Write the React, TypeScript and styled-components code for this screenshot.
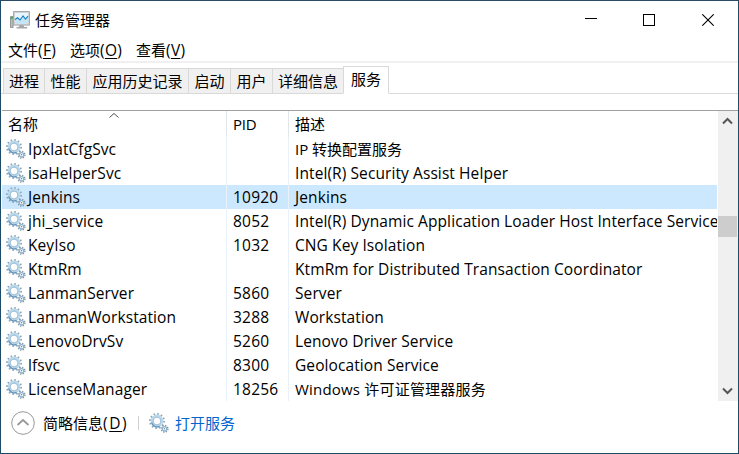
import React from 'react';
import styled, { createGlobalStyle } from 'styled-components';

const GlobalStyle = createGlobalStyle`
  html, body { margin: 0; padding: 0; background: #fff; overflow: hidden; }
  * { box-sizing: border-box; }
`;

const Window = styled.div`
  display: flex;
  flex-direction: column;
  width: 739px;
  height: 454px;
  border: 1px solid #1d4c68;
  border-top-color: #2b4a63;
  background: #fff;
  color: #000;
  font: 400 15px/24px 'Open Sans', 'Noto Sans CJK SC', sans-serif;
  overflow: hidden;
  white-space: nowrap;
`;

const TitleBar = styled.header`
  display: flex;
  align-items: center;
  height: 37px;
  padding-left: 8px;
`;

const Title = styled.span`
  flex: 1;
  margin-left: 4px;
`;

const Caption = styled.div`
  display: flex;
  margin-right: 1px;
`;

const CaptionButton = styled.button`
  display: grid;
  place-items: center;
  width: 58.5px;
  height: 34px;
  padding: 0;
  border: 0;
  background: none;
`;

const MenuBar = styled.nav`
  display: flex;
  height: 25px;
  border-bottom: 2px solid #f0f0f0;
  padding-left: 7px;
`;

const MenuItem = styled.span<{ $width: number }>`
  width: ${(p) => p.$width}px;
`;

const Key = styled.span<{ $spacing?: number }>`
  font-size: 15.5px;
  line-height: 1;
  letter-spacing: ${(p) => p.$spacing ?? 0.3}px;
`;

const Mnemonic = styled.span`
  text-decoration: underline;
  text-decoration-thickness: 1px;
  text-underline-offset: 2px;
  text-decoration-skip-ink: none;
`;

const TabStrip = styled.div`
  display: flex;
  align-items: flex-end;
  height: 31px;
  margin-bottom: 16px;
  padding-left: 2px;
  box-shadow: inset 0 -1px #d9d9d9;
`;

const Tab = styled.div<{ $width: number; $active?: boolean }>`
  width: ${(p) => p.$width}px;
  height: ${(p) => (p.$active ? 28 : 26)}px;
  padding-top: 1px;
  border: 1px solid #d9d9d9;
  border-right-width: ${(p) => (p.$active ? 1 : 0)}px;
  border-bottom-color: ${(p) => (p.$active ? '#fff' : '#d9d9d9')};
  background: ${(p) => (p.$active ? '#fff' : '#f0f0f0')};
  line-height: 22px;
  text-align: center;
`;

const ListView = styled.main`
  display: flex;
  height: 291px;
  margin-left: 1px;
  border-top: 1px solid #a0a0a0;
`;

const Table = styled.div`
  width: 715px;
  overflow: hidden;
`;

const HeaderRow = styled.div`
  display: grid;
  grid-template-columns: 225px 62px 1fr;
  height: 26px;
`;

const HeaderCell = styled.div<{ $spacing?: number }>`
  display: flex;
  padding-left: 6px;
  padding-top: 1px;
  border-right: 1px solid #e0e6ea;
  letter-spacing: ${(p) => p.$spacing ?? 0}px;
  &:last-child { border-right: 0; }
`;

const SortMark = styled.svg`
  margin: 0 0 0 68px;
`;

const Row = styled.div<{ $selected?: boolean }>`
  display: grid;
  grid-template-columns: 225px 62px 1fr;
  height: 24px;
  background: ${(p) => (p.$selected ? '#cce8ff' : '#fff')};
`;

const Cell = styled.div<{ $cjk?: boolean; $spacing?: number }>`
  display: flex;
  align-items: center;
  height: 24px;
  padding-left: 6px;
  border-right: 1px solid #e9f2fb;
  overflow: hidden;
  font-size: ${(p) => (p.$cjk ? 15 : 15.5)}px;
  line-height: ${(p) => (p.$cjk ? 24 : 25)}px;
  letter-spacing: ${(p) => p.$spacing ?? 0.09}px;
  &:first-child { padding-left: 4px; }
  &:last-child { border-right: 0; }
`;

const CellText = styled.span<{ $drop?: boolean }>`
  margin-top: ${(p) => (p.$drop ? 1 : 0)}px;
`;

const ScrollBar = styled.div`
  display: flex;
  flex-direction: column;
  width: 20px;
  margin-left: 1px;
  background: #f0f0f0;
`;

const ScrollButton = styled.div`
  display: grid;
  place-items: center;
  width: 19px;
  height: 20px;
`;

const Track = styled.div`
  flex: 1;
  padding-top: 85px;
`;

const Thumb = styled.div`
  width: 19px;
  height: 21px;
  background: #cdcdcd;
`;

const Footer = styled.footer`
  display: flex;
  align-items: center;
  height: 44px;
  padding-left: 10px;
`;

const Toggle = styled.div`
  display: flex;
  align-items: center;
  gap: 8px;
  width: 127px;
`;

const Divider = styled.i`
  width: 1px;
  height: 14px;
  background: #d0d0d0;
`;

const OpenLink = styled.a`
  display: flex;
  align-items: center;
  gap: 4px;
  margin-left: 10px;
  color: #0066cc;
`;

const GearSvg = styled.svg`
  flex: none;
  margin-right: 2px;
`;

function Gears() {
  return (
    <GearSvg width="20" height="20" viewBox="0 0 20 20" fill="none">
      <circle cx="8" cy="8" r="7" stroke="#8fa6b8" strokeWidth="2" strokeDasharray="1.6 2.065" />
      <circle cx="8" cy="8" r="5.2" stroke="#b9d9ec" strokeWidth="2.4" />
      <path d="M2.6 9.5a5.8 5.8 0 0 0 8 3.9" stroke="#6796bc" strokeWidth="1.3" />
      <circle cx="8" cy="8" r="3.9" fill="#fff" stroke="#83a9c5" strokeWidth=".8" />
      <circle cx="15.6" cy="15.8" r="3.3" stroke="#8296a5" strokeWidth="1.5" strokeDasharray="1.3 1.29" />
      <circle cx="15.6" cy="15.8" r="2.2" fill="#fff" stroke="#91b5cd" strokeWidth="1.4" />
      <circle cx="15.6" cy="15.8" r=".7" fill="#5f86a2" />
    </GearSvg>
  );
}

function MonitorIcon() {
  return (
    <svg width="22" height="20" viewBox="0 0 22 20">
      <path d="M1.5 6.5h2.6v11H1.5z" fill="#b9bcbc" stroke="#858989" strokeWidth=".8" />
      <path d="M1.6 7h2.2v1.8H1.6z" fill="#37b34a" />
      <path d="M10.5 15h4l.7 2h3v1.4H7.5V17h2.4z" fill="#a4a8aa" />
      <path d="M4.5 1.5h16v13.6h-16z" fill="#d0d3d3" stroke="#a6aaab" />
      <path d="M6 3h13v10.4H6z" fill="#e8f6fe" />
      <path d="M6 9.5 8.5 7.8 11 10l3-4 2.5 3.2L19 6.2v7.2H6z" fill="#c3e5f8" />
      <path d="M6 9.5 8.5 7.8 11 10l3-4 2.5 3.2L19 6.2" fill="none" stroke="#1681c4" strokeWidth="1.1" />
    </svg>
  );
}

const menus = [
  { label: '文件', key: 'F', width: 62 },
  { label: '选项', key: 'O', width: 66 },
  { label: '查看', key: 'V', width: 60 },
];

const tabs = [
  { label: '进程', width: 41 },
  { label: '性能', width: 42 },
  { label: '应用历史记录', width: 102 },
  { label: '启动', width: 42 },
  { label: '用户', width: 42 },
  { label: '详细信息', width: 71 },
  { label: '服务', width: 46, active: true },
];

const services = [
  { name: 'IpxlatCfgSvc', pid: '', text: 'IP 转换配置服务', cjk: true, textGap: 0 },
  { name: 'isaHelperSvc', pid: '', text: 'Intel(R) Security Assist Helper' },
  { name: 'Jenkins', pid: '10920', text: 'Jenkins', selected: true },
  { name: 'jhi_service', pid: '8052', text: 'Intel(R) Dynamic Application Loader Host Interface Service' },
  { name: 'KeyIso', pid: '1032', text: 'CNG Key Isolation' },
  { name: 'KtmRm', pid: '', text: 'KtmRm for Distributed Transaction Coordinator' },
  { name: 'LanmanServer', pid: '5860', text: 'Server' },
  { name: 'LanmanWorkstation', pid: '3288', text: 'Workstation' },
  { name: 'LenovoDrvSv', pid: '5260', text: 'Lenovo Driver Service' },
  { name: 'lfsvc', pid: '8300', text: 'Geolocation Service' },
  { name: 'LicenseManager', pid: '18256', text: 'Windows 许可证管理器服务', cjk: true, textGap: 0.2 },
];

export default function App() {
  return (
    <>
      <GlobalStyle />
      <Window>
        <TitleBar>
          <MonitorIcon />
          <Title>任务管理器</Title>
          <Caption>
            <CaptionButton aria-label="最小化">
              <svg width="12" height="12" shapeRendering="crispEdges"><path d="M0 4.5h12" stroke="#000" /></svg>
            </CaptionButton>
            <CaptionButton aria-label="最大化">
              <svg width="12" height="12" shapeRendering="crispEdges"><path d="M.5.5h11v11H.5z" fill="none" stroke="#000" /></svg>
            </CaptionButton>
            <CaptionButton aria-label="关闭">
              <svg width="12" height="12"><path d="m.3.3 11.4 11.4M11.7.3.3 11.7" stroke="#000" strokeWidth="1.1" /></svg>
            </CaptionButton>
          </Caption>
        </TitleBar>
        <MenuBar>
          {menus.map((m) => (
            <MenuItem key={m.key} $width={m.width}>
              {m.label}
              <Key>(<Mnemonic>{m.key}</Mnemonic>)</Key>
            </MenuItem>
          ))}
        </MenuBar>
        <TabStrip>
          {tabs.map((t) => (
            <Tab key={t.label} $width={t.width} $active={t.active}>{t.label}</Tab>
          ))}
        </TabStrip>
        <ListView>
          <Table>
            <HeaderRow>
              <HeaderCell>
                名称
                <SortMark width="16" height="8"><path d="m3.5 5.5 4.5-4 4.5 4" fill="none" stroke="#555" /></SortMark>
              </HeaderCell>
              <HeaderCell $spacing={-0.2}>PID</HeaderCell>
              <HeaderCell>描述</HeaderCell>
            </HeaderRow>
            {services.map((s) => (
              <Row key={s.name} $selected={s.selected}>
                <Cell><Gears /><CellText $drop>{s.name}</CellText></Cell>
                <Cell $spacing={0.2}><CellText $drop>{s.pid}</CellText></Cell>
                <Cell $cjk={s.cjk} $spacing={s.textGap}><CellText $drop={!s.cjk}>{s.text}</CellText></Cell>
              </Row>
            ))}
          </Table>
          <ScrollBar>
            <ScrollButton>
              <svg width="11" height="8"><path d="m1 6.5 4.5-4.5L10 6.5" fill="none" stroke="#555" strokeWidth="2" /></svg>
            </ScrollButton>
            <Track><Thumb /></Track>
            <ScrollButton>
              <svg width="11" height="8"><path d="m1 1.5 4.5 4.5L10 1.5" fill="none" stroke="#555" strokeWidth="2" /></svg>
            </ScrollButton>
          </ScrollBar>
        </ListView>
        <Footer>
          <Toggle>
            <svg width="24" height="24" fill="none">
              <circle cx="12" cy="12" r="11.3" stroke="#999" />
              <path d="m6.5 14 5.5-5 5.5 5" stroke="#999" strokeWidth="1.8" />
            </svg>
            <span>简略信息<Key $spacing={1.6}>(<Mnemonic>D</Mnemonic>)</Key></span>
          </Toggle>
          <Divider />
          <OpenLink><Gears />打开服务</OpenLink>
        </Footer>
      </Window>
    </>
  );
}
